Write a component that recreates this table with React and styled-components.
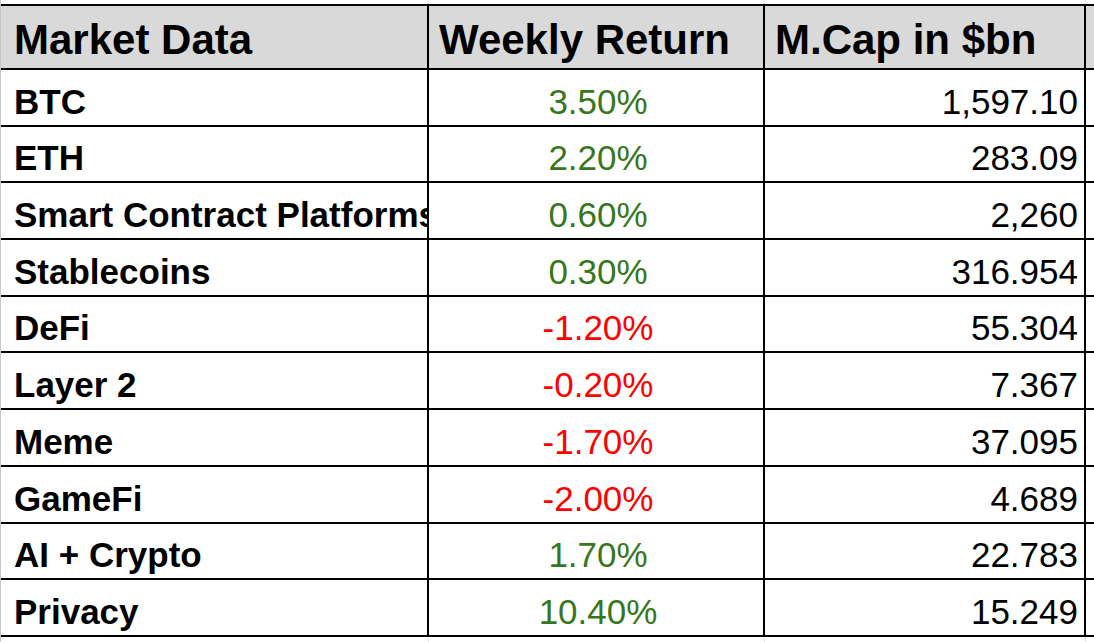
import React from 'react'
import styled, { createGlobalStyle } from 'styled-components'

const rows = [
  { name: 'BTC', ret: '3.50%', up: true, cap: '1,597.10' },
  { name: 'ETH', ret: '2.20%', up: true, cap: '283.09' },
  { name: 'Smart Contract Platforms', ret: '0.60%', up: true, cap: '2,260' },
  { name: 'Stablecoins', ret: '0.30%', up: true, cap: '316.954' },
  { name: 'DeFi', ret: '-1.20%', up: false, cap: '55.304' },
  { name: 'Layer 2', ret: '-0.20%', up: false, cap: '7.367' },
  { name: 'Meme', ret: '-1.70%', up: false, cap: '37.095' },
  { name: 'GameFi', ret: '-2.00%', up: false, cap: '4.689' },
  { name: 'AI + Crypto', ret: '1.70%', up: true, cap: '22.783' },
  { name: 'Privacy', ret: '10.40%', up: true, cap: '15.249' },
]

const App = () => {
  return (
    <>
      <GlobalStyle />
      <Sheet>
        <Gutter>
          <GutterCell $h="4px" />
          <GutterCell $h="66px" $head />
          {rows.map((r) => (
            <GutterCell key={r.name} $h="56.7px" />
          ))}
          <GutterCell $h="8px" />
        </Gutter>
        <Table>
          <FillerRow>
            <FillerCell /><FillerCell /><FillerCell /><FillerCell />
          </FillerRow>
          <HeaderRow>
            <HeadCell>Market Data</HeadCell>
            <HeadCell>Weekly Return</HeadCell>
            <HeadCell>M.Cap in $bn</HeadCell>
            <HeadCell $last />
          </HeaderRow>
          {rows.map((r) => (
            <DataRow key={r.name}>
              <NameCell>{r.name}</NameCell>
              <Cell $align="center" $color={r.up ? '#38761d' : '#ff0000'}>{r.ret}</Cell>
              <Cell $align="right">{r.cap}</Cell>
              <Cell $last />
            </DataRow>
          ))}
          <FillerRow>
            <FillerCell /><FillerCell /><FillerCell /><FillerCell />
          </FillerRow>
        </Table>
      </Sheet>
    </>
  )
}

const GlobalStyle = createGlobalStyle`
  html, body {
    margin: 0;
    padding: 0;
    background: #ffffff;
    font-family: "Liberation Sans", Arial, sans-serif;
  }
`

const Sheet = styled.div`
  width: 1094px;
  height: 642px;
  overflow: hidden;
  display: flex;
  background: #ffffff;
`

const Gutter = styled.div`
  width: 4px;
  display: flex;
  flex-direction: column;
  box-sizing: border-box;
  border-right: 1px solid #c6c6c6;
`

const GutterCell = styled.div`
  height: ${(p) => p.$h};
  flex-shrink: 0;
  box-sizing: border-box;
  background: ${(p) => (p.$head ? '#e4e4e4' : '#eef1f6')};
  border-bottom: 1px solid #c6c6c6;
`

const Table = styled.div`
  flex: 1;
  display: flex;
  flex-direction: column;
`

const gridCols = `
  display: grid;
  grid-template-columns: 428px 336px 321px 1fr;
  box-sizing: border-box;
`

const FillerRow = styled.div`
  ${gridCols}
  height: 4px;
  flex-shrink: 0;
  &:last-child {
    height: 8px;
  }
`

const FillerCell = styled.div`
  box-sizing: border-box;
  border-right: 1px solid #e2e2e2;
`

const HeaderRow = styled.div`
  ${gridCols}
  height: 66px;
  flex-shrink: 0;
  background: #d9d9d9;
  border-top: 2px solid #000000;
  border-bottom: 2px solid #000000;
`

const HeadCell = styled.div`
  display: flex;
  align-items: flex-end;
  box-sizing: border-box;
  padding: 0 10px 7px 10px;
  border-right: ${(p) => (p.$last ? 'none' : '2px solid #000000')};
  font-size: 42px;
  line-height: 1;
  font-weight: 700;
  color: #000000;
  white-space: nowrap;
  overflow: hidden;
  &:first-child {
    padding-left: 13px;
  }
`

const DataRow = styled.div`
  ${gridCols}
  height: 56.7px;
  flex-shrink: 0;
  border-bottom: 2px solid #000000;
`

const Cell = styled.div`
  display: flex;
  align-items: flex-end;
  justify-content: ${(p) =>
    p.$align === 'center' ? 'center' : p.$align === 'right' ? 'flex-end' : 'flex-start'};
  box-sizing: border-box;
  padding: 0 6px 6px 10px;
  border-right: ${(p) => (p.$last ? 'none' : '2px solid #000000')};
  font-size: 35px;
  line-height: 1;
  color: ${(p) => p.$color || '#000000'};
  white-space: nowrap;
  overflow: hidden;
`

const NameCell = styled(Cell)`
  font-weight: 700;
  padding-left: 13px;
  padding-right: 0;
`

export default App
